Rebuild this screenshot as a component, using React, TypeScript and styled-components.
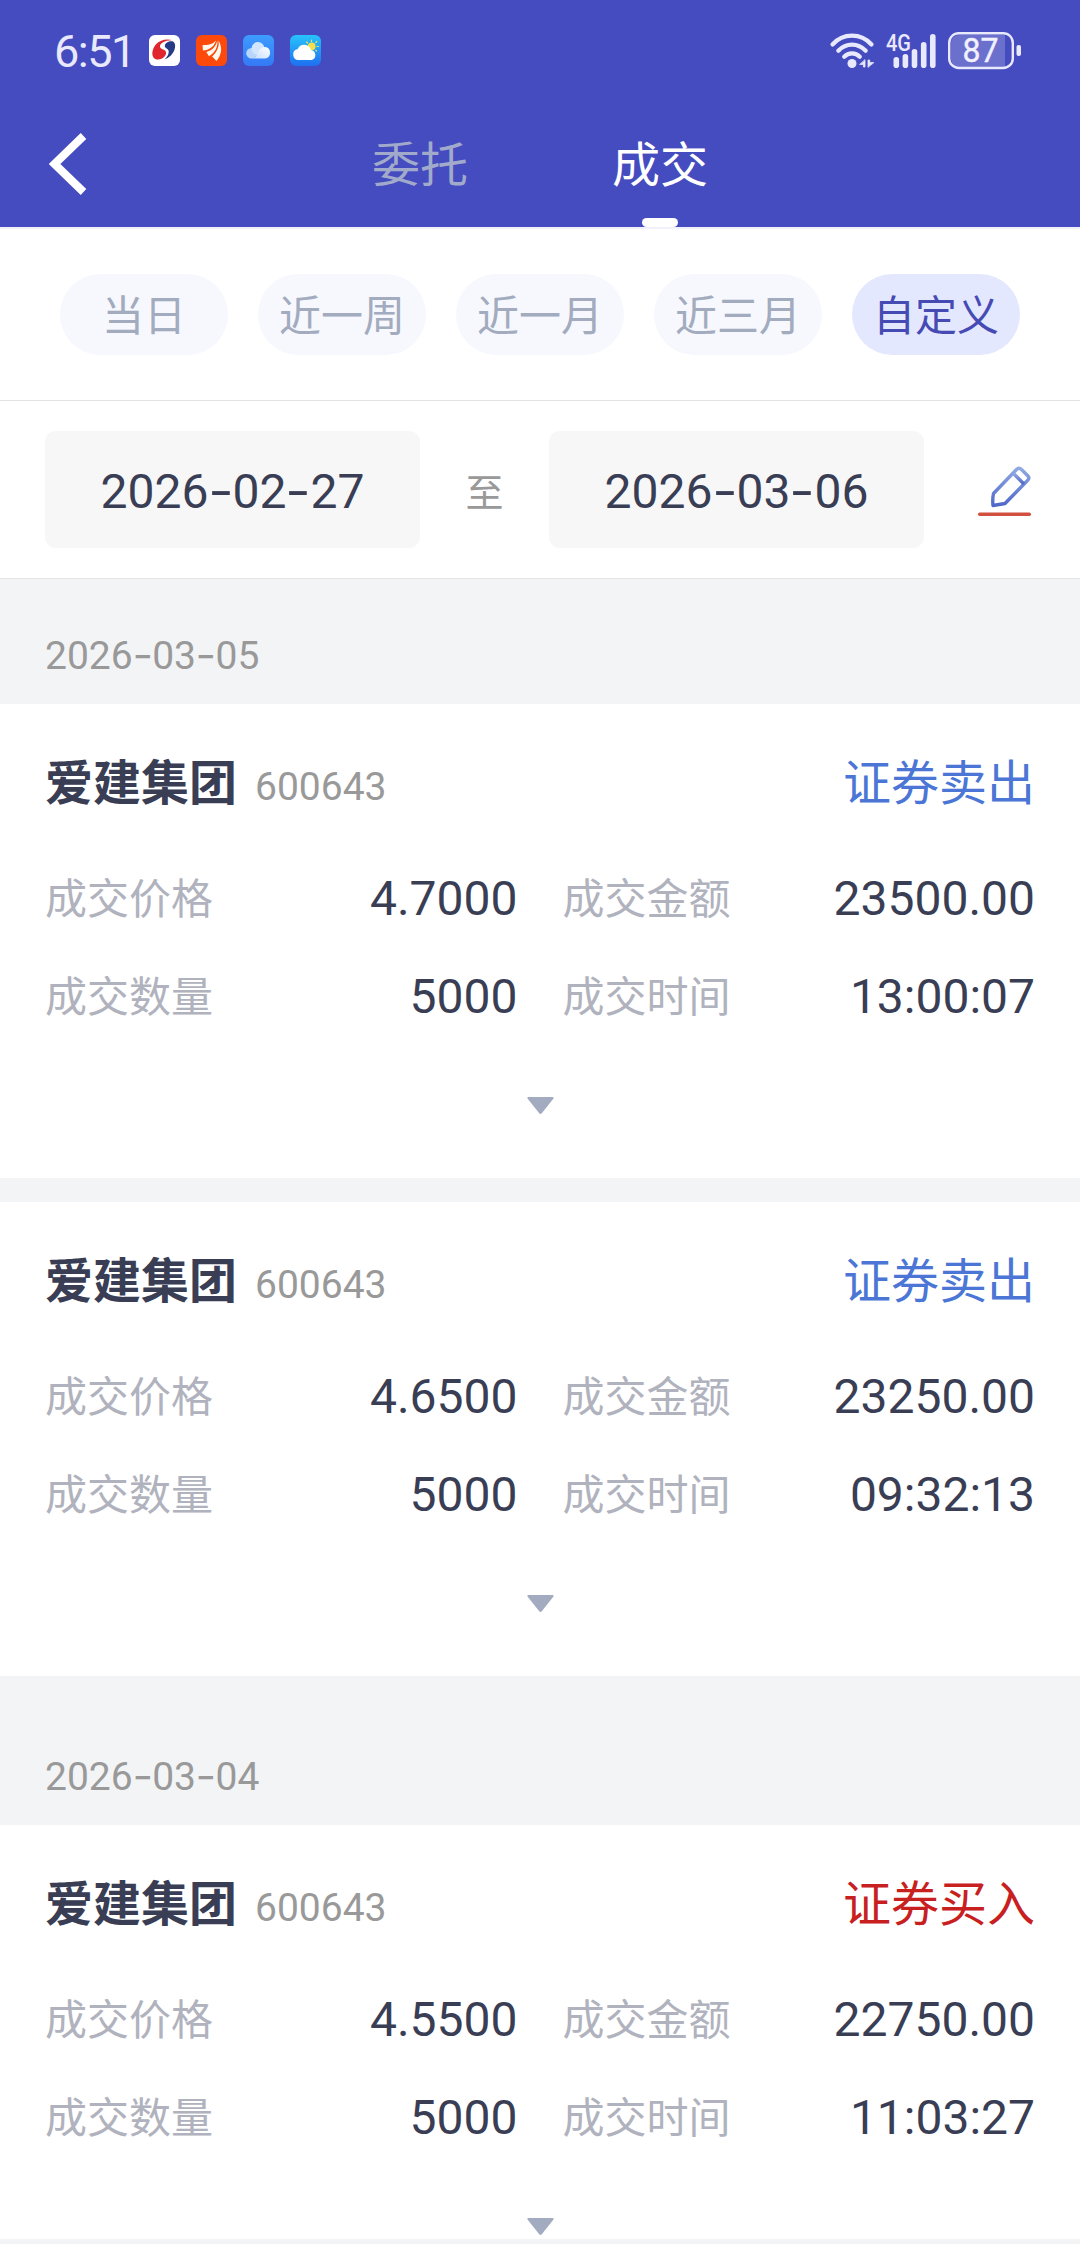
import React from "react";
import styled, { createGlobalStyle } from "styled-components";

const GlobalStyle = createGlobalStyle`
  * { box-sizing: border-box; }
  body {
    margin: 0;
    background: #f3f4f6;
    font-family: Roboto, "Noto Sans CJK SC", sans-serif;
    color: #393e55;
  }
`;

const Screen = styled.div`
  width: 1080px;
  height: 2244px;
  overflow: hidden;
  display: flex;
  flex-direction: column;
  background: #f3f4f6;
`;

const Header = styled.header`
  flex: none;
  height: 229px;
  background: #454cbf;
  border-bottom: 2px solid #f0f1fa;
  display: flex;
  flex-direction: column;
`;

const StatusBar = styled.div`
  height: 101px;
  padding: 0 58px 0 54px;
  display: flex;
  align-items: center;
  justify-content: space-between;
`;

const StatusGroup = styled.div<{ $gap: number }>`
  display: flex;
  align-items: center;
  gap: ${(p) => p.$gap}px;
  svg { display: block; overflow: visible; }
`;

const Clock = styled.span`
  font-size: 45px;
  line-height: 50px;
  padding-top: 3px;
  font-weight: 400;
  letter-spacing: -1.5px;
  color: #e9e9fd;
  width: 79px;
  white-space: nowrap;
`;

const NavBar = styled.div`
  height: 126px;
  display: grid;
  grid-template-columns: 300px 240px 240px 300px;
`;

const BackButton = styled.button`
  border: 0;
  background: none;
  padding: 0 0 0 49px;
  display: flex;
  align-items: center;
`;

const Tab = styled.div<{ $active?: boolean }>`
  display: flex;
  flex-direction: column;
  align-items: center;
  justify-content: space-between;
  padding-top: 29px;
  font-size: 48px;
  line-height: 72px;
  color: ${(p) => (p.$active ? "#ffffff" : "#a2aacb")};
`;

const TabMark = styled.span`
  width: 36px;
  height: 9px;
  border-radius: 5px;
  background: #ffffff;
`;

const RangeBar = styled.div`
  flex: none;
  height: 172px;
  padding: 45px 60px 0;
  display: flex;
  gap: 30px;
  align-items: flex-start;
  background: #ffffff;
  border-bottom: 1px solid #e2e3e5;
`;

const RangePill = styled.button<{ $active?: boolean }>`
  width: 168px;
  height: 81px;
  padding: 4px 0 0;
  border: 0;
  border-radius: 41px;
  font-family: inherit;
  font-size: 42px;
  line-height: 60px;
  white-space: nowrap;
  background: ${(p) => (p.$active ? "#e4e8fe" : "#f6f8fd")};
  color: ${(p) => (p.$active ? "#464bb4" : "#a3abbe")};
`;

const DateBar = styled.div`
  flex: none;
  height: 178px;
  padding: 0 48px 0 45px;
  display: flex;
  align-items: center;
  background: #ffffff;
  border-bottom: 1px solid #e2e3e5;
`;

const DateField = styled.div`
  width: 375px;
  height: 117px;
  border-radius: 11px;
  background: #f7f7f8;
  display: flex;
  align-items: center;
  justify-content: center;
  font-size: 48px;
  line-height: 56px;
  padding-top: 3px;
`;

const DateSeparator = styled.span`
  width: 129px;
  text-align: center;
  font-size: 38px;
  color: #999999;
`;

const EditButton = styled.button`
  margin-left: auto;
  padding: 5px 0 0;
  border: 0;
  background: none;
  svg { display: block; }
`;

const Dash = styled.span`
  display: inline-block;
  padding: 0 0.02em;
  font-family: Inter, sans-serif;
  transform: scaleX(1.15);
`;

const List = styled.main`
  flex: none;
  height: 1660px;
  overflow: hidden;
`;

const DayHeader = styled.div<{ $first?: boolean }>`
  height: ${(p) => (p.$first ? 125 : 149)}px;
  padding: 0 45px 25px;
  display: flex;
  align-items: flex-end;
  font-size: 39px;
  line-height: 46px;
  color: #999999;
`;

const Card = styled.article`
  height: 474px;
  padding: 44px 45px 0;
  background: #ffffff;
  & + & { margin-top: 24px; }
`;

const CardTitle = styled.div`
  height: 72px;
  display: flex;
  align-items: baseline;
  line-height: 72px;
`;

const StockName = styled.span`
  font-size: 48px;
  font-weight: 700;
`;

const StockCode = styled.span`
  margin-left: 18px;
  font-size: 39px;
  color: #999999;
`;

const Side = styled.span<{ $buy?: boolean }>`
  margin-left: auto;
  font-size: 48px;
  color: ${(p) => (p.$buy ? "#c8201f" : "#4b76d6")};
`;

const Fields = styled.div`
  margin-top: 30px;
  display: grid;
  grid-template-columns: 1fr 1fr;
  column-gap: 45px;
  grid-auto-rows: 98px;
`;

const Field = styled.div`
  display: flex;
  align-items: center;
  justify-content: space-between;
  white-space: nowrap;
`;

const Label = styled.span`
  padding-top: 2px;
  font-size: 42px;
  line-height: 60px;
  color: #b0b2bd;
`;

const Value = styled.span`
  font-size: 48px;
  line-height: 56px;
`;

const Expand = styled.div`
  margin-top: 51px;
  display: flex;
  justify-content: center;
  svg { display: block; }
`;

function DateText({ value }: { value: string }) {
  const parts = value.split("-");
  return (
    <span>
      {parts.map((part, i) => (
        <React.Fragment key={i}>
          {i > 0 && <Dash>-</Dash>}
          {part}
        </React.Fragment>
      ))}
    </span>
  );
}

const BankIcon = () => (
  <svg width="31" height="31" viewBox="0 0 31 31">
    <rect width="31" height="31" rx="6" fill="#fff" />
    <path d="M23.500 5.400C18.500 3.200 11 4.600 7 9.300 3.600 13.200 2.300 18.800 4.300 22.200c2.200 3.500 8.200 2.700 11-.4 2.300-2.600 2.400-5.300.3-6.600-1.700-1-4.400-1.200-4.600-3.600-.2-3.300 5.300-6.600 12.500-6.200z" fill="#e0252f" />
    <path d="M23.500 6.300c2.700 1.300 3.300 4.700 2 8.400-1.500 4.300-5.300 8.200-10.200 9.700 3.200-2.400 5-5.900 4.200-8.900-.6-2-3.900-2.300-3.700-4.800.2-2.900 4.200-4.900 7.700-4.400z" fill="#263a86" />
  </svg>
);

const BrokerIcon = () => (
  <svg width="31" height="31" viewBox="0 0 31 31">
    <rect width="31" height="31" rx="6" fill="#fd4a0a" />
    <g fill="#fff8ee">
      <path d="M20 5.500C16.500 9.500 12 10 6.500 10.200L7 15.500c6-.5 11-3.500 13-10z" />
      <path d="M21.300 5.500c-1.500 6.500-5.500 10-11 11.500l2.700 4.200c6-3.500 9-9 8.300-15.700z" />
      <path d="M22.500 5.500c1 6-1.500 11.500-6.300 16L20.500 26c5.500-6.500 6-14 2-20.500z" />
    </g>
  </svg>
);

const CloudIcon = () => (
  <svg width="31" height="31" viewBox="0 0 31 31">
    <defs>
      <linearGradient id="cloudBg" x1="0" y1="0" x2="0" y2="1">
        <stop offset="0" stopColor="#3d9cff" />
        <stop offset="1" stopColor="#3479f5" />
      </linearGradient>
      <linearGradient id="cloudFront" x1="1" y1="0" x2="0" y2="1">
        <stop offset="0" stopColor="#fff" />
        <stop offset="1" stopColor="#c4dcff" />
      </linearGradient>
    </defs>
    <rect width="31" height="31" rx="6" fill="url(#cloudBg)" />
    <circle cx="8.500" cy="18.300" r="5.300" fill="#b9d6ff" />
    <circle cx="15" cy="13.500" r="6.500" fill="#d2e5ff" />
    <path d="M8.500 23.500c3.500 0 4.500-2.500 6.500-6.500 1.800-3.600 4-5 7-5a5.800 5.800 0 0 1 0 11.500z" fill="url(#cloudFront)" />
  </svg>
);

const WeatherIcon = () => (
  <svg width="31" height="31" viewBox="0 0 31 31">
    <defs>
      <linearGradient id="weatherBg" x1="0" y1="0" x2="0" y2="1">
        <stop offset="0" stopColor="#28c4fb" />
        <stop offset="1" stopColor="#1f6ff0" />
      </linearGradient>
    </defs>
    <rect width="31" height="31" rx="6" fill="url(#weatherBg)" />
    <g stroke="#e6e06a" strokeWidth="1.200" strokeLinecap="round">
      <path d="M21.500 5v1.500M16.500 7l1 1M26.800 6.500l-1 1M28.500 11.500H27M26.500 16l-.8-.8" />
    </g>
    <circle cx="21.700" cy="11.300" r="3.900" fill="#f5e04c" />
    <path d="M8.500 25a5.500 5.500 0 0 1-.8-10.900 7 7 0 0 1 13.200.9 5.100 5.100 0 0 1 .6 10z" fill="#fff" />
  </svg>
);

const WifiIcon = () => (
  <svg width="45" height="36" viewBox="0 0 45 36" fill="none" stroke="#e9e9fd" strokeLinecap="round">
    <path d="M2.500 11.500C13 -.3 31 -.3 41.500 11.500" strokeWidth="4.200" />
    <path d="M8.300 17.800C16 9.500 28 9.500 35.700 17.800" strokeWidth="4.200" />
    <path d="M14.200 23.800C18.500 19.300 25.500 19.300 29.800 23.800" strokeWidth="4.200" />
    <circle cx="22" cy="30.500" r="4.500" fill="#e9e9fd" stroke="none" />
    <path d="M35 27v7h-1.600v-2.600H30zM38 34v-7h1.700v2.600H43.500z" fill="#e9e9fd" stroke="#e9e9fd" strokeWidth=".8" />
  </svg>
);

const SignalIcon = () => (
  <svg width="51" height="36" viewBox="0 0 51 36" fill="#e9e9fd">
    <text x="0" y="18" fontFamily="Roboto, sans-serif" fontSize="23" fontWeight="500" textLength="25" lengthAdjust="spacingAndGlyphs">4G</text>
    <rect x="7.500" y="24" width="5.600" height="11" rx="2.800" />
    <rect x="16.600" y="21" width="5.600" height="14" rx="2.800" />
    <rect x="25.700" y="16" width="5.600" height="19" rx="2.800" />
    <rect x="34.900" y="9" width="5.600" height="26" rx="2.800" />
    <rect x="44" y="1" width="5.600" height="34" rx="2.800" />
  </svg>
);

const BatteryIcon = () => (
  <svg width="74" height="38" viewBox="0 0 74 38">
    <path d="M11 3h46v32H11a8 8 0 0 1-8-8V11a8 8 0 0 1 8-8z" fill="#6b70cd" />
    <rect x="1.200" y="1.200" width="63.600" height="34.800" rx="9.500" fill="none" stroke="#e9e9fd" strokeWidth="2.400" />
    <rect x="68.500" y="13" width="4.500" height="11" rx="2" fill="#e9e9fd" />
    <text x="32.500" y="30" textAnchor="middle" fontFamily="Roboto, sans-serif" fontSize="33" fontWeight="400" textLength="36" lengthAdjust="spacingAndGlyphs" fill="#f1f1ff" stroke="#f1f1ff" strokeWidth=".4">87</text>
  </svg>
);

const BackIcon = () => (
  <svg width="38" height="66" viewBox="0 0 38 66">
    <path d="M34.500 5L5.500 33L34.500 61" fill="none" stroke="#fff" strokeWidth="8" />
  </svg>
);

const PencilIcon = () => (
  <svg width="56" height="54" viewBox="0 0 56 54">
    <defs>
      <linearGradient id="pencil" x1="0" y1="0" x2="0" y2="1">
        <stop offset="0" stopColor="#8fa9e3" />
        <stop offset="1" stopColor="#5068c9" />
      </linearGradient>
    </defs>
    <g transform="translate(1 0)">
      <g fill="none" stroke="url(#pencil)" strokeWidth="3.400" strokeLinejoin="round">
        <path d="M16.500 28.500L39.500 4.500Q42 2 44.500 4.500L51 11Q53 13 50.500 15.500L28 38.500L16 40.500Q15.300 34 16.500 28.500z" />
        <path d="M36.500 8.500L47 19" />
      </g>
      <rect x="1" y="47.500" width="53" height="3.500" rx="1.700" fill="#d1503f" />
    </g>
  </svg>
);

const ArrowIcon = () => (
  <svg width="27" height="18" viewBox="0 0 27 18">
    <path d="M1.500 0h24q1.800 0 .8 1.700L15 16q-1.500 1.800-3 0L.7 1.700Q-.3 0 1.500 0z" fill="#a3abc0" />
  </svg>
);

type Deal = { price: string; amount: string; qty: string; time: string; buy?: boolean };

const days: { date: string; deals: Deal[] }[] = [
  {
    date: "2026-03-05",
    deals: [
      { price: "4.7000", amount: "23500.00", qty: "5000", time: "13:00:07" },
      { price: "4.6500", amount: "23250.00", qty: "5000", time: "09:32:13" },
    ],
  },
  {
    date: "2026-03-04",
    deals: [{ price: "4.5500", amount: "22750.00", qty: "5000", time: "11:03:27", buy: true }],
  },
];

const ranges = ["当日", "近一周", "近一月", "近三月", "自定义"];

function DealCard({ deal }: { deal: Deal }) {
  const fields = [
    ["成交价格", deal.price],
    ["成交金额", deal.amount],
    ["成交数量", deal.qty],
    ["成交时间", deal.time],
  ];
  return (
    <Card>
      <CardTitle>
        <StockName>爱建集团</StockName>
        <StockCode>600643</StockCode>
        <Side $buy={deal.buy}>{deal.buy ? "证券买入" : "证券卖出"}</Side>
      </CardTitle>
      <Fields>
        {fields.map(([label, value]) => (
          <Field key={label}>
            <Label>{label}</Label>
            <Value>{value}</Value>
          </Field>
        ))}
      </Fields>
      <Expand>
        <ArrowIcon />
      </Expand>
    </Card>
  );
}

export default function App() {
  return (
    <Screen>
      <GlobalStyle />
      <Header>
        <StatusBar>
          <StatusGroup $gap={16}>
            <Clock>6:51</Clock>
            <BankIcon />
            <BrokerIcon />
            <CloudIcon />
            <WeatherIcon />
          </StatusGroup>
          <StatusGroup $gap={11}>
            <WifiIcon />
            <SignalIcon />
            <BatteryIcon />
          </StatusGroup>
        </StatusBar>
        <NavBar>
          <BackButton aria-label="返回">
            <BackIcon />
          </BackButton>
          <Tab>委托</Tab>
          <Tab $active>
            成交
            <TabMark />
          </Tab>
        </NavBar>
      </Header>
      <RangeBar>
        {ranges.map((range, i) => (
          <RangePill key={range} $active={i === ranges.length - 1}>
            {range}
          </RangePill>
        ))}
      </RangeBar>
      <DateBar>
        <DateField>
          <DateText value="2026-02-27" />
        </DateField>
        <DateSeparator>至</DateSeparator>
        <DateField>
          <DateText value="2026-03-06" />
        </DateField>
        <EditButton aria-label="编辑">
          <PencilIcon />
        </EditButton>
      </DateBar>
      <List>
        {days.map((day, i) => (
          <section key={day.date}>
            <DayHeader $first={i === 0}>
              <DateText value={day.date} />
            </DayHeader>
            {day.deals.map((deal) => (
              <DealCard key={deal.time} deal={deal} />
            ))}
          </section>
        ))}
      </List>
    </Screen>
  );
}
